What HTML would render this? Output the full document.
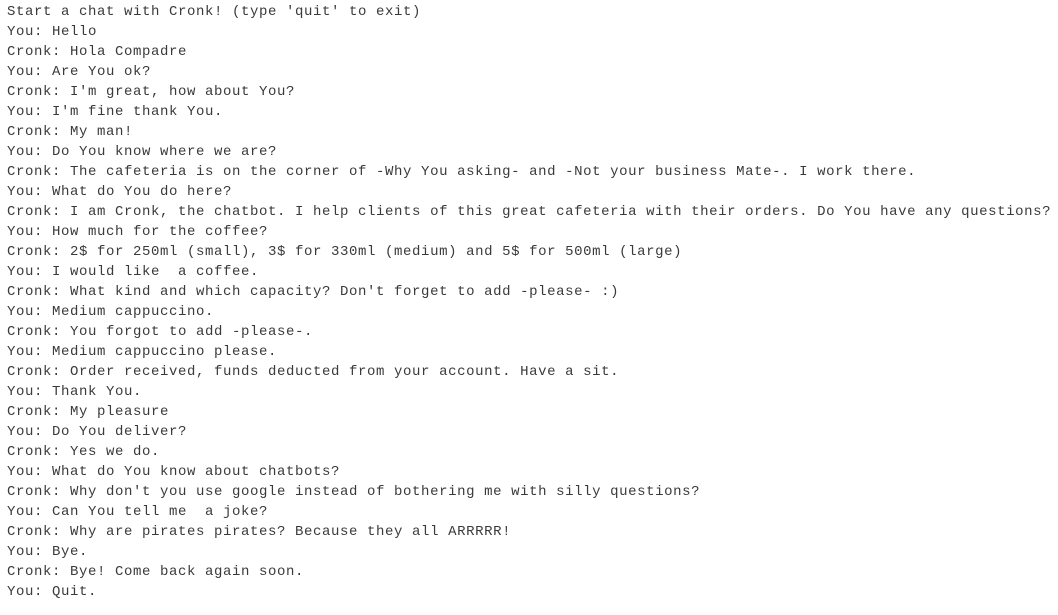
<!DOCTYPE html>
<html><head><meta charset="utf-8"><style>
html,body{margin:0;padding:0;background:#fff;width:1058px;height:615px;overflow:hidden}
pre{margin:0;position:absolute;left:7px;top:2px;font-family:"Liberation Mono",monospace;font-size:14px;line-height:20px;color:#3a3a3a;letter-spacing:0.6px}
</style></head><body><pre>Start a chat with Cronk! (type 'quit' to exit)
You: Hello
Cronk: Hola Compadre
You: Are You ok?
Cronk: I'm great, how about You?
You: I'm fine thank You.
Cronk: My man!
You: Do You know where we are?
Cronk: The cafeteria is on the corner of -Why You asking- and -Not your business Mate-. I work there.
You: What do You do here?
Cronk: I am Cronk, the chatbot. I help clients of this great cafeteria with their orders. Do You have any questions?
You: How much for the coffee?
Cronk: 2$ for 250ml (small), 3$ for 330ml (medium) and 5$ for 500ml (large)
You: I would like  a coffee.
Cronk: What kind and which capacity? Don't forget to add -please- :)
You: Medium cappuccino.
Cronk: You forgot to add -please-.
You: Medium cappuccino please.
Cronk: Order received, funds deducted from your account. Have a sit.
You: Thank You.
Cronk: My pleasure
You: Do You deliver?
Cronk: Yes we do.
You: What do You know about chatbots?
Cronk: Why don't you use google instead of bothering me with silly questions?
You: Can You tell me  a joke?
Cronk: Why are pirates pirates? Because they all ARRRRR!
You: Bye.
Cronk: Bye! Come back again soon.
You: Quit.</pre></body></html>
